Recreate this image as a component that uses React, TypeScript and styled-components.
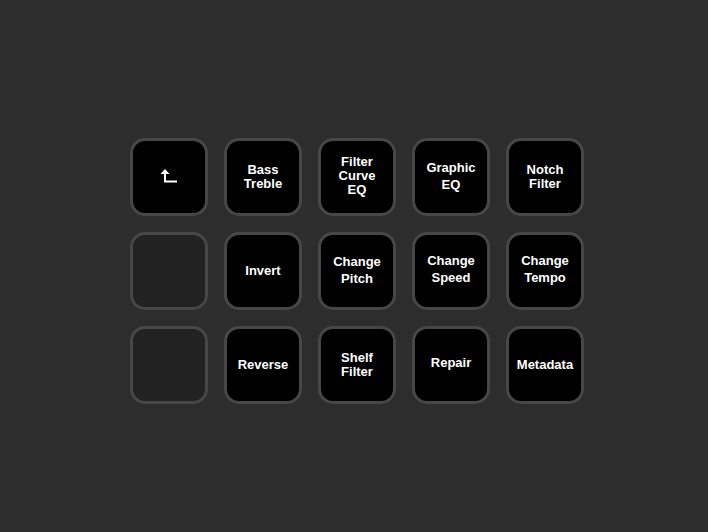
import React from 'react'
import styled, { createGlobalStyle } from 'styled-components'

type Key = { label?: string[]; back?: boolean; empty?: boolean; tall?: boolean; lift?: number }

const keys: Key[] = [
	{ back: true },
	{ label: ['Bass', 'Treble'] },
	{ label: ['Filter', 'Curve', 'EQ'], lift: 1 },
	{ label: ['Graphic', 'EQ'], tall: true, lift: 1 },
	{ label: ['Notch', 'Filter'] },
	{ empty: true },
	{ label: ['Invert'] },
	{ label: ['Change', 'Pitch'], tall: true, lift: 1 },
	{ label: ['Change', 'Speed'], tall: true, lift: 2 },
	{ label: ['Change', 'Tempo'], tall: true, lift: 2 },
	{ empty: true },
	{ label: ['Reverse'] },
	{ label: ['Shelf', 'Filter'] },
	{ label: ['Repair'], lift: 2 },
	{ label: ['Metadata'] },
]

const BackIcon = () => (
	<svg width='18' height='15' viewBox='0 0 18 15'>
		<path d='M5 0 L9.5 5 L0.5 5 Z' fill='#fff' />
		<path d='M5 4 V12.5 H17' stroke='#fff' strokeWidth='2' fill='none' />
	</svg>
)

//=> DOM
export default () => (
	<>
		<Global />
		<Page>
			<Grid>
				{keys.map((k, i) => (
					<KeyBox key={i} $empty={k.empty}>
						{k.back && <BackIcon />}
						{k.label && (
							<Label $tall={k.tall} $lift={k.lift ?? 0}>
								{k.label.map(l => (
									<span key={l}>{l}</span>
								))}
							</Label>
						)}
					</KeyBox>
				))}
			</Grid>
		</Page>
	</>
)

//=> Style
const Global = createGlobalStyle`
	html, body {
		margin: 0;
		padding: 0;
		background: #2d2d2d;
	}
	* {
		box-sizing: border-box;
	}
`

const Page = styled.div`
	width: 708px;
	height: 532px;
	background: #2d2d2d;
	display: flex;
	align-items: center;
	justify-content: center;
	padding: 10px 0 0 6px;
`

const Grid = styled.div`
	display: grid;
	grid-template-columns: repeat(5, 78px);
	grid-auto-rows: 78px;
	gap: 16px;
`

const KeyBox = styled.div<{ $empty?: boolean }>`
	border: 3px solid #474747;
	border-radius: 15px;
	background: ${p => (p.$empty ? '#222222' : '#000000')};
	display: flex;
	align-items: center;
	justify-content: center;
	padding-bottom: 1px;
`

const Label = styled.div<{ $tall?: boolean; $lift: number }>`
	display: flex;
	flex-direction: column;
	align-items: center;
	font-family: 'Liberation Sans', Arial, sans-serif;
	font-weight: bold;
	font-size: 13px;
	line-height: ${p => (p.$tall ? '17px' : '14px')};
	color: #ffffff;
	text-align: center;
	margin-bottom: ${p => p.$lift * 2}px;
`
